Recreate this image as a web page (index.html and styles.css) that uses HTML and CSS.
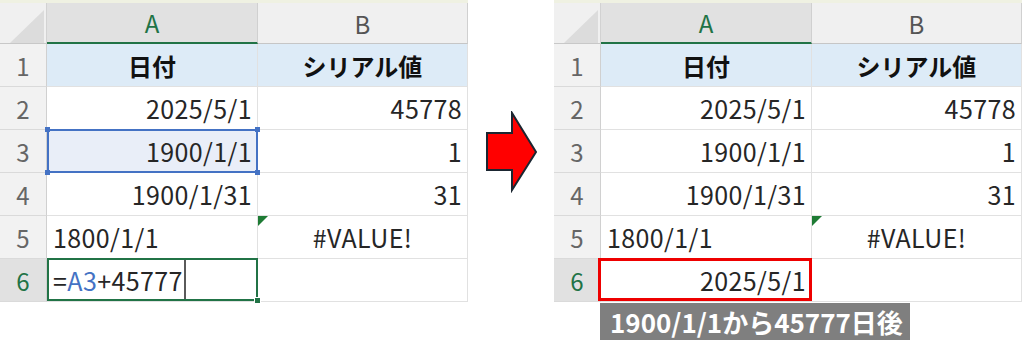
FILE: index.html
```html
<!DOCTYPE html>
<html lang="ja">
<head>
  <meta charset="UTF-8">
  <title>シリアル値</title>
  <link rel="stylesheet" href="styles.css">
</head>
<body>

<div class="page">

  <!-- before: typing the formula -->
  <div class="sheet">
    <div class="strip"></div>
    <div class="grid">
      <div class="corner"></div>
      <div class="col-head sel">A</div>
      <div class="col-head">B</div>

      <div class="row-head">1</div>
      <div class="cell title">日付</div>
      <div class="cell title">シリアル値</div>

      <div class="row-head">2</div>
      <div class="cell num">2025/5/1</div>
      <div class="cell num">45778</div>

      <div class="row-head">3</div>
      <div class="cell num ref">1900/1/1
        <span class="knob tl"></span><span class="knob tr"></span>
        <span class="knob bl"></span><span class="knob br"></span>
      </div>
      <div class="cell num">1</div>

      <div class="row-head">4</div>
      <div class="cell num">1900/1/31</div>
      <div class="cell num">31</div>

      <div class="row-head">5</div>
      <div class="cell">1800/1/1</div>
      <div class="cell center err">#VALUE!</div>

      <div class="row-head sel">6</div>
      <div class="cell editing"><span>=<span class="ref-text">A3</span>+45777</span><span class="caret"></span><span class="fill"></span></div>
      <div class="cell"></div>
    </div>
  </div>

  <div class="arrow">
    <svg width="54" height="82" viewBox="0 0 54 82">
      <polygon points="2,22 27,22 27,2 51,41 27,79 27,59 2,59" fill="#ff0000" stroke="#1b2631" stroke-width="2" stroke-linejoin="miter"/>
    </svg>
  </div>

  <!-- after: the result -->
  <div class="sheet">
    <div class="strip"></div>
    <div class="grid">
      <div class="corner"></div>
      <div class="col-head sel">A</div>
      <div class="col-head">B</div>

      <div class="row-head">1</div>
      <div class="cell title">日付</div>
      <div class="cell title">シリアル値</div>

      <div class="row-head">2</div>
      <div class="cell num">2025/5/1</div>
      <div class="cell num">45778</div>

      <div class="row-head">3</div>
      <div class="cell num">1900/1/1</div>
      <div class="cell num">1</div>

      <div class="row-head">4</div>
      <div class="cell num">1900/1/31</div>
      <div class="cell num">31</div>

      <div class="row-head">5</div>
      <div class="cell">1800/1/1</div>
      <div class="cell center err">#VALUE!</div>

      <div class="row-head sel">6</div>
      <div class="cell num marked">2025/5/1</div>
      <div class="cell"></div>
    </div>
    <div class="note">1900/1/1から45777日後</div>
  </div>

</div>

</body>
</html>
```

FILE: styles.css
```css
body {
  margin: 0;
  background-color: #fff;
  font-family: "Noto Sans CJK JP", "Noto Sans", sans-serif;
  color: #262626;
}

.page {
  display: flex;
  align-items: flex-start;
}

.sheet {
  width: 468px;
}

.strip {
  height: 3px;
  background-color: #eff1e2;
}

.grid {
  display: grid;
  grid-template-columns: 47px 211px 210px;
  grid-template-rows: 41px repeat(6, 43px);
}

.grid > div {
  box-sizing: border-box;
}

.corner {
  position: relative;
  background-color: #f0f0f0;
  border-right: 1px solid #d2d2d2;
  border-bottom: 1px solid #c8c8c8;
}

.corner::after {
  content: "";
  position: absolute;
  left: 10px;
  top: 7px;
  width: 34px;
  height: 33px;
  background-color: #dcdcdc;
  clip-path: polygon(100% 0, 100% 100%, 0 100%);
}

.col-head {
  display: flex;
  align-items: center;
  justify-content: center;
  background-color: #f0f0f0;
  border-right: 1px solid #d0d0d0;
  border-bottom: 1px solid #c6c6c6;
  font-size: 24px;
  color: #555;
}

.col-head.sel {
  background-color: #e1e1e1;
  color: #217346;
  border-bottom: 2px solid #217346;
}

.row-head {
  display: flex;
  align-items: center;
  justify-content: center;
  background-color: #f2f2f2;
  border-right: 1px solid #d0d0d0;
  border-bottom: 1px solid #dadada;
  font-size: 24px;
  color: #666;
}

.row-head.sel {
  background-color: #e1e1e1;
  color: #217346;
}

.cell {
  position: relative;
  display: flex;
  align-items: center;
  padding: 0 6px;
  border-right: 1px solid #e1e1e1;
  border-bottom: 1px solid #e1e1e1;
  font-size: 25px;
  letter-spacing: 0.4px;
  white-space: nowrap;
}

.cell.num {
  justify-content: flex-end;
  padding-right: 5px;
}

.cell.center {
  justify-content: center;
}

.cell.title {
  justify-content: center;
  background-color: #ddebf7;
  font-size: 24px;
  letter-spacing: 0;
  font-weight: bold;
  color: #111;
}

/* green error flag in the corner */
.cell.err::before {
  content: "";
  position: absolute;
  top: 0;
  left: 0;
  border-top: 10px solid #1e7b34;
  border-right: 10px solid transparent;
}

/* range referenced by the formula */
.cell.ref {
  background-color: #e9eef8;
}

.cell.ref::after {
  content: "";
  position: absolute;
  top: -1px;
  left: 0;
  right: -1px;
  bottom: -1px;
  border: 2px solid #4472c4;
}

.knob {
  position: absolute;
  width: 5px;
  height: 5px;
  background-color: #4472c4;
  z-index: 1;
}

.knob.tl { top: -3px; left: -2px; }
.knob.tr { top: -3px; right: -3px; }
.knob.bl { bottom: -3px; left: -2px; }
.knob.br { bottom: -3px; right: -3px; }

/* cell being edited */
.cell.editing {
  align-items: center;
  padding-left: 6px;
}

.cell.editing::after {
  content: "";
  position: absolute;
  top: -1px;
  left: 0;
  right: -1px;
  bottom: 0;
  border: 2px solid #217346;
}

.ref-text {
  color: #4472c4;
}

.caret {
  align-self: stretch;
  width: 2px;
  margin-left: 1px;
  background-color: #5a5a5a;
}

.fill {
  position: absolute;
  right: -4px;
  bottom: -3px;
  width: 5px;
  height: 5px;
  background-color: #217346;
  border: 1px solid #fff;
  z-index: 1;
}

/* highlighted result */
.cell.marked::after {
  content: "";
  position: absolute;
  top: -1px;
  left: -3px;
  right: -1px;
  bottom: 0;
  border: 3px solid #ee0000;
}

.arrow {
  width: 86px;
  padding-top: 111px;
  padding-left: 17px;
  box-sizing: border-box;
}

.arrow svg {
  display: block;
}

.note {
  width: 310px;
  height: 37px;
  margin-top: 1px;
  margin-left: 46px;
  padding-left: 10px;
  box-sizing: border-box;
  background-color: #7f7f7f;
  color: #fff;
  font-size: 26px;
  font-weight: bold;
  line-height: 37px;
  white-space: nowrap;
}
```
